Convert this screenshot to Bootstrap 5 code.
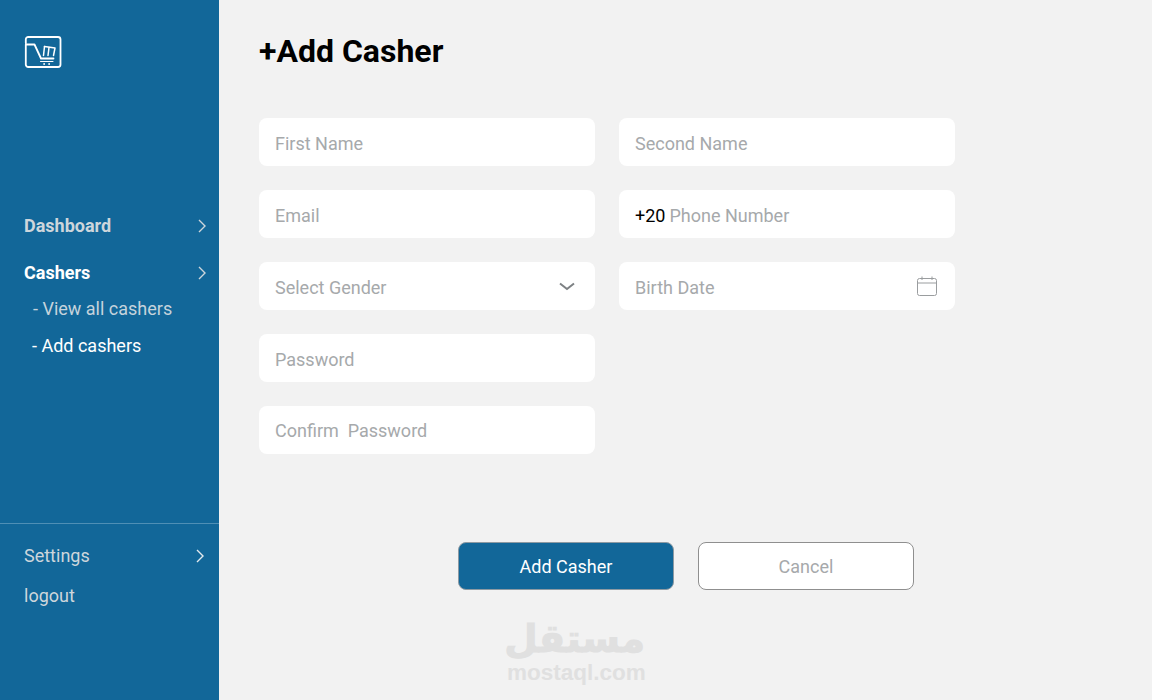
<!DOCTYPE html>
<html lang="en">
<head>
    <meta charset="UTF-8">
    <meta name="viewport" content="width=device-width, initial-scale=1.0">
    <title>Add Casher</title>
    <link rel="stylesheet" href="https://cdn.jsdelivr.net/npm/bootstrap@5.3.0/dist/css/bootstrap.min.css">
    <style>
        body {
            background: #f2f2f2;
            font-family: Roboto, "Liberation Sans", sans-serif;
            height: 700px;
            overflow: hidden;
        }

        .page-wrap {
            height: 700px;
        }

        /* Sidebar */
        .side-bar {
            width: 219px;
            background: #126799;
            flex-shrink: 0;
        }

        .side-logo {
            height: 214px;
            padding: 35px 0 0 24px;
        }

        .side-link {
            display: flex;
            justify-content: space-between;
            align-items: center;
            height: 24px;
            padding: 0 13px 0 24px;
            font-size: 18px;
            color: #cdd6dc;
            text-decoration: none;
            line-height: 24px;
        }

        .side-link.is-strong {
            font-weight: 700;
            margin-bottom: 23px;
        }

        .side-link.is-active {
            color: #fff;
            margin-bottom: 12px;
        }

        .side-sub {
            display: block;
            height: 24px;
            margin-bottom: 13px;
            padding-left: 33px;
            font-size: 18px;
            line-height: 24px;
            color: #c5d3dc;
            text-decoration: none;
        }

        .side-sub.is-active {
            padding-left: 32px;
            color: #fff;
        }

        .side-foot {
            border-top: 1px solid #4f8fb5;
            margin-top: auto;
            height: 177px;
            padding-top: 20px;
        }

        .side-foot .side-link {
            margin-bottom: 16px;
            padding-right: 15px;
        }

        /* Form */
        .main-area {
            padding: 30px 0 0 40px;
        }

        .page-title {
            font-family: Roboto, "Liberation Sans", sans-serif;
            font-size: 32px;
            line-height: 42px;
            font-weight: 700;
            color: #000;
            margin: 0 0 46px;
        }

        .form-layout {
            display: grid;
            grid-template-columns: 336px 336px;
            grid-auto-rows: 48px;
            gap: 24px;
        }

        .field-box {
            display: flex;
            align-items: center;
            height: 48px;
            background: #fff;
            border-radius: 8px;
            padding: 2px 16px 0;
            font-size: 18px;
            color: #000;
        }

        .field-box.is-last {
            padding-top: 0;
        }

        .field-box.has-chevron {
            padding-right: 20px;
        }

        .field-box.has-date {
            padding-right: 18px;
        }

        .field-box svg {
            margin-top: -2px;
        }

        .field-box .form-control {
            border: 0;
            padding: 0;
            border-radius: 0;
            background: transparent;
            box-shadow: none;
            font-size: 18px;
            color: #000;
        }

        .field-box .form-control::placeholder {
            color: #a6a9ab;
            opacity: 1;
        }

        .btn-row {
            display: flex;
            gap: 24px;
            margin: 88px 0 0 199px;
        }

        .btn-row .btn {
            width: 216px;
            height: 48px;
            font-size: 18px;
            border-radius: 8px;
        }

        .btn-add {
            background: #126799;
            border: 1px solid #8d9aa3;
            color: #fff;
        }

        .btn-cancel {
            background: #fff;
            border: 1px solid #8f8f8f;
            color: #a6a9ab;
        }

        .stamp-mark {
            width: 138px;
            margin: 26px 0 0 248px;
            text-align: center;
            color: #e0e0e0;
            font-weight: 700;
        }

        .stamp-ar {
            font-family: "DejaVu Sans", sans-serif;
            font-size: 38.5px;
            line-height: 46px;
            -webkit-text-stroke: 1px #e0e0e0;
        }

        .stamp-en {
            font-family: "Liberation Sans", sans-serif;
            font-size: 22.5px;
            line-height: 22px;
            white-space: nowrap;
        }
    </style>
</head>
<body>
    <div class="page-wrap d-flex">
        <!-- Sidebar -->
        <aside class="side-bar d-flex flex-column">
            <div class="side-logo">
                <svg width="38" height="34" viewBox="0 0 38 34" fill="none" stroke="#fff" stroke-width="1.8" stroke-linejoin="round" stroke-linecap="round">
                    <path d="M1.8 8V4.5A2.5 2.5 0 0 1 4.3 2H34A2.5 2.5 0 0 1 36.5 4.5V29.5A2.5 2.5 0 0 1 34 32H4.3A2.5 2.5 0 0 1 1.8 29.5V9.5H10.5L17 23.5H29.5"/>
                    <path d="M20.5 11.5L31 13L29.5 20.5" stroke-width="1.5"/>
                    <path d="M20.5 11.5L19.5 20.5M25 12.5L24 20.5" stroke-width="1.5"/>
                    <path d="M16.5 26.5H29" stroke-width="1"/>
                    <circle cx="20" cy="29" r=".5" stroke-width="1"/>
                    <circle cx="25" cy="29" r=".5" stroke-width="1"/>
                </svg>
            </div>
            <a class="side-link is-strong" href="#">Dashboard
                <svg width="8" height="14" viewBox="0 0 8 14" fill="none" stroke="#cdd6dc" stroke-width="1.4"><path d="M1 1L7 7L1 13"/></svg>
            </a>
            <a class="side-link is-strong is-active" href="#">Cashers
                <svg width="8" height="14" viewBox="0 0 8 14" fill="none" stroke="#cdd6dc" stroke-width="1.4"><path d="M1 1L7 7L1 13"/></svg>
            </a>
            <a class="side-sub" href="#">- View all cashers</a>
            <a class="side-sub is-active" href="#">- Add cashers</a>
            <div class="side-foot">
                <a class="side-link" href="#">Settings
                    <svg width="8" height="14" viewBox="0 0 8 14" fill="none" stroke="#e3e9ed" stroke-width="1.4"><path d="M1 1L7 7L1 13"/></svg>
                </a>
                <a class="side-link" href="#">logout</a>
            </div>
        </aside>

        <!-- Main Content -->
        <main class="main-area flex-grow-1">
            <h1 class="page-title">+Add Casher</h1>
            <form class="form-layout">
                <div class="field-box"><input class="form-control" type="text" placeholder="First Name"></div>
                <div class="field-box"><input class="form-control" type="text" placeholder="Second Name"></div>
                <div class="field-box"><input class="form-control" type="email" placeholder="Email"></div>
                <div class="field-box gap-1"><span>+20</span><input class="form-control" type="tel" placeholder="Phone Number"></div>
                <div class="field-box has-chevron">
                    <input class="form-control" type="text" placeholder="Select Gender">
                    <svg class="flex-shrink-0" width="16" height="9" viewBox="0 0 16 9" fill="none" stroke="#7d8184" stroke-width="2"><path d="M1 1.5L8 7L15 1.5"/></svg>
                </div>
                <div class="field-box has-date">
                    <input class="form-control" type="text" placeholder="Birth Date">
                    <svg class="flex-shrink-0" width="20" height="20" viewBox="0 0 20 20" fill="none" stroke="#9a9d9f" stroke-width="1"><rect x=".5" y="2.5" width="19" height="17" rx="2"/><path d="M.5 7H19.5M5 .5V4M15 .5V4"/></svg>
                </div>
                <div class="field-box"><input class="form-control" type="password" placeholder="Password"></div>
                <div></div>
                <div class="field-box is-last"><input class="form-control" type="password" placeholder="Confirm  Password"></div>
            </form>
            <div class="btn-row">
                <button class="btn btn-add" type="button">Add Casher</button>
                <button class="btn btn-cancel" type="button">Cancel</button>
            </div>
            <div class="stamp-mark">
                <div class="stamp-ar" lang="ar" dir="rtl">مستقل</div>
                <div class="stamp-en">mostaql.com</div>
            </div>
        </main>
    </div>
    <script src="https://cdn.jsdelivr.net/npm/bootstrap@5.3.0/dist/js/bootstrap.bundle.min.js"></script>
</body>
</html>
